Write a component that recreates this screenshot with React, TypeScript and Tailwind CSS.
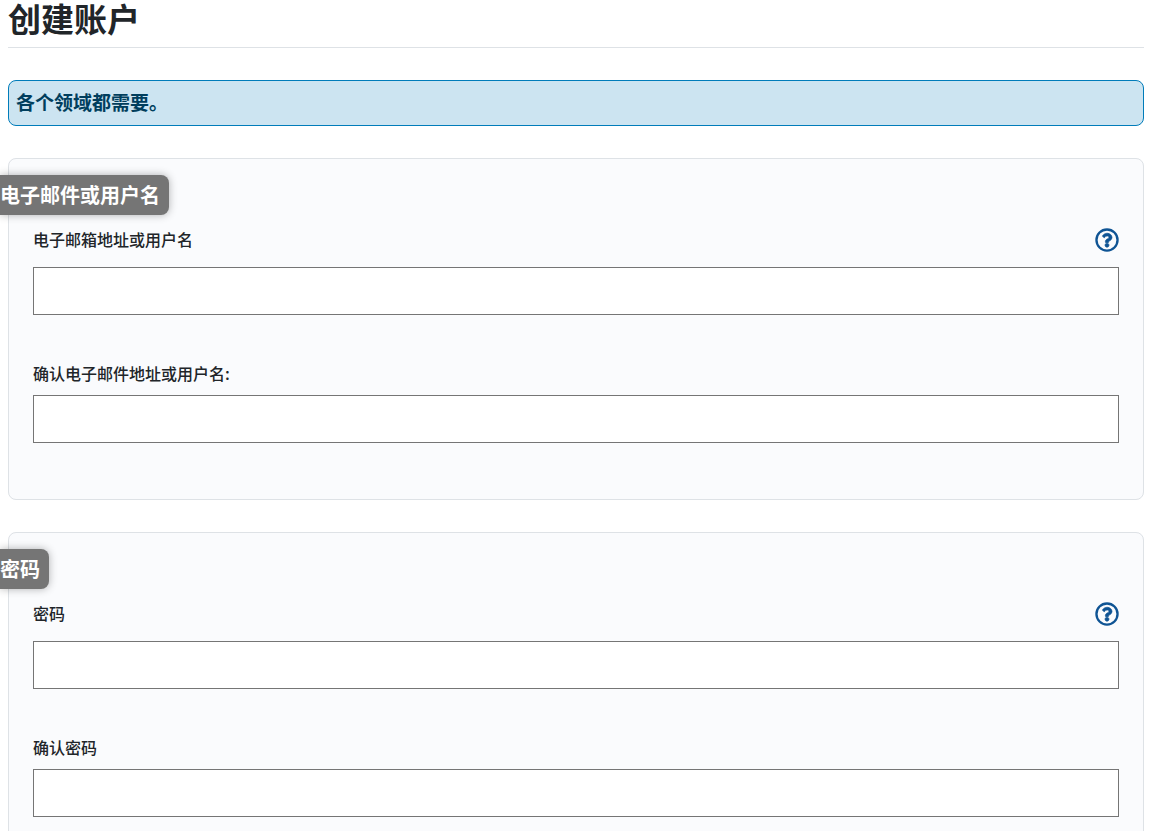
type Field = { id: string; label: string; type: string; help?: boolean };

function HelpIcon() {
  return (
    <svg viewBox="0 0 512 512" className="size-6" aria-hidden="true">
      <circle cx="256" cy="256" r="225" fill="none" stroke="currentColor" strokeWidth="50" />
      <path
        fill="currentColor"
        stroke="currentColor"
        strokeWidth="14"
        d="M363.244 200.8c0 67.052-72.421 68.084-72.421 92.863V300c0 6.627-5.373 12-12 12h-45.647c-6.627 0-12-5.373-12-12v-8.659c0-35.745 27.1-50.034 47.579-61.516 17.561-9.845 28.324-16.541 28.324-29.579 0-17.246-21.999-28.693-39.784-28.693-23.189 0-33.894 10.977-48.942 29.969-4.057 5.12-11.46 6.071-16.666 2.124l-27.824-21.098c-5.107-3.872-6.251-11.066-2.644-16.363C184.846 131.491 214.94 112 261.794 112c49.071 0 101.45 38.304 101.45 88.8zM298 368c0 23.159-18.841 42-42 42s-42-18.841-42-42 18.841-42 42-42 42 18.841 42 42z"
      />
    </svg>
  );
}

function FormField({ id, label, type, help }: Field) {
  return (
    <div className="mb-12">
      {help ? (
        <div className="mb-3.5 flex h-[26px] items-start justify-between">
          <label htmlFor={id} className="text-base leading-6 font-medium">
            {label}
          </label>
          <button type="button" aria-label="帮助" className="py-px text-[#0f5494]">
            <HelpIcon />
          </button>
        </div>
      ) : (
        <label htmlFor={id} className="mb-3 block text-base leading-5 font-medium">
          {label}
        </label>
      )}
      <input
        id={id}
        type={type}
        className="block h-12 w-full border border-[#757575] bg-white px-3 text-base"
      />
    </div>
  );
}

function Section({ title, fields }: { title: string; fields: Field[] }) {
  return (
    <fieldset className="mb-8 min-w-0 rounded-lg border border-[#dee2e6] bg-[#fafbfd] pt-4 pb-2">
      <h2 className="-ml-[9px] mb-3 flex h-10 w-fit items-center rounded-r-lg bg-[#757575] pr-[9px] text-xl font-bold text-white shadow-[0_0_8px_rgba(0,0,0,0.3)]">
        {title}
      </h2>
      <div className="px-6">
        {fields.map((field) => (
          <FormField key={field.id} {...field} />
        ))}
      </div>
    </fieldset>
  );
}

export default function App() {
  return (
    <main
      lang="zh-CN"
      className="overflow-x-clip bg-white pr-[5px] pl-2 font-['Noto_Sans_CJK_SC',sans-serif] text-[#212529]"
    >
      <h1 className="mb-8 border-b border-[#dee2e6] pb-1.5 font-['Liberation_Sans','Noto_Sans_CJK_SC',sans-serif] text-[33px] leading-[41px] font-bold">
        创建账户
      </h1>
      <p className="mb-8 rounded-lg border border-[#007cba] bg-[#cce4f1] pt-2 pr-2 pb-2.5 pl-[7px] text-[19px] leading-[26px] font-bold text-[#003e5d]">
        各个领域都需要。
      </p>
      <form>
        <Section
          title="电子邮件或用户名"
          fields={[
            { id: "username", label: "电子邮箱地址或用户名", type: "text", help: true },
            { id: "confirm-username", label: "确认电子邮件地址或用户名:", type: "text" },
          ]}
        />
        <Section
          title="密码"
          fields={[
            { id: "password", label: "密码", type: "password", help: true },
            { id: "confirm-password", label: "确认密码", type: "password" },
          ]}
        />
      </form>
    </main>
  );
}
